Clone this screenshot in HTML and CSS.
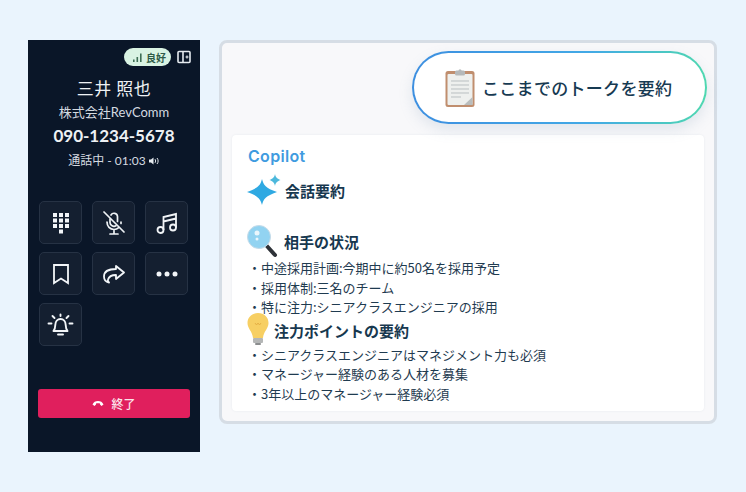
FILE: index.html
```html
<!DOCTYPE html>
<html lang="ja">
<head>
    <meta charset="UTF-8">
    <title>Copilot</title>
    <link rel="stylesheet" href="styles.css">
</head>
<body>
    <div class="page">
        <div class="phone">
            <div class="phone-top">
                <span class="signal">
                    <svg width="11" height="9" viewBox="0 0 11 9"><path d="M1 6.500h1.600V9H1zM4.500 4h1.600v5H4.500zM8 .5h1.600V9H8z" fill="#3f6f55"/></svg>
                    良好
                </span>
                <svg class="side-icon" width="14" height="14" viewBox="0 0 14 14" fill="none" stroke="#e6ebf0" stroke-width="1.600"><rect x="1" y="1.500" width="12" height="11" rx="1"/><path d="M6 1.500v11"/><path d="M8.500 7h3M10 5.500v3" stroke-width="1.200"/></svg>
            </div>
            <div class="name">三井 照也</div>
            <div class="company">株式会社RevComm</div>
            <div class="number">090-1234-5678</div>
            <div class="status">通話中 - 01:03
                <svg width="11" height="8" viewBox="0 0 11 8"><path d="M0 2.500h2L4.500.5v7L2 5.500H0z" fill="#e6ebf0"/><path d="M6 2.200c.8 1 .8 2.600 0 3.600M8 1c1.500 1.800 1.500 4.200 0 6" fill="none" stroke="#e6ebf0" stroke-width="1"/></svg>
            </div>
            <div class="controls">
                <button class="control">
                    <svg width="18" height="22" viewBox="0 0 18 22" fill="#f2f5f8"><rect x="1" y="1" width="4" height="4"/><rect x="7" y="1" width="4" height="4"/><rect x="13" y="1" width="4" height="4"/><rect x="1" y="6.500" width="4" height="4"/><rect x="7" y="6.500" width="4" height="4"/><rect x="13" y="6.500" width="4" height="4"/><rect x="1" y="12" width="4" height="4"/><rect x="7" y="12" width="4" height="4"/><rect x="13" y="12" width="4" height="4"/><rect x="7" y="17.500" width="4" height="4"/></svg>
                </button>
                <button class="control">
                    <svg width="28" height="26" viewBox="0 0 28 26" fill="none" stroke="#eef2f5" stroke-width="1.700" stroke-linecap="round"><path d="M4 2l20 20"/><path d="M11 5a3.500 3.500 0 0 1 6.500 1.500v5"/><path d="M10 9v3.500a4 4 0 0 0 6 3.300"/><path d="M7 12c0 4.500 3 7.500 7 7.500 2 0 3.500-.7 4.700-1.800M21 13.500V12M14 19.500v4M10 24h8"/></svg>
                </button>
                <button class="control">
                    <svg width="24" height="24" viewBox="0 0 24 24" fill="none" stroke="#f2f5f8" stroke-width="1.800"><circle cx="5.500" cy="19" r="3"/><circle cx="18" cy="16.500" r="3"/><path d="M8.500 19V6L21 3v13.500M8.500 10.500 21 7.500"/></svg>
                </button>
                <button class="control">
                    <svg width="18" height="22" viewBox="0 0 18 22" fill="none" stroke="#f2f5f8" stroke-width="1.800"><path d="M2 2h14v18l-7-4.500L2 20z"/></svg>
                </button>
                <button class="control">
                    <svg width="22" height="20" viewBox="0 0 22 20" fill="none" stroke="#f2f5f8" stroke-width="1.800" stroke-linejoin="round"><path d="M13 2l8 6.500-8 6.500v-4c-4.500 0-7 1-8 4.500-.5 1.500.5 2.500 1 3-3-.5-5-3-5-6 0-5 5-7.500 12-7.500z"/></svg>
                </button>
                <button class="control">
                    <svg width="22" height="6" viewBox="0 0 22 6" fill="#f2f5f8"><circle cx="3" cy="3" r="2.500"/><circle cx="11" cy="3" r="2.500"/><circle cx="19" cy="3" r="2.500"/></svg>
                </button>
                <button class="control">
                    <svg width="27" height="26" viewBox="0 0 27 26" fill="none" stroke="#f2f5f8" stroke-width="1.900" stroke-linecap="round" stroke-linejoin="round"><path d="M6.500 19c1.500-1.500 1.700-3 1.800-6 .1-3.500 2.200-6 5.200-6s5.100 2.500 5.200 6c.1 3 .3 4.500 1.800 6z"/><path d="M11 22.500h5"/><path d="M13.500 4V2.500M5.500 4l2 2M21.500 4l-2 2M1.500 11.500h3M22.500 11.500h3"/></svg>
                </button>
            </div>
            <button class="end-call">
                <svg width="12" height="7" viewBox="0 0 12 7"><path d="M.5 4.500C1.500 2 3.500 1 6 1s4.500 1 5.500 3.500L9.500 6 8 4.500V3.500C7 3 5 3 4 3.500v1L2.500 6z" fill="#fff"/></svg>
                終了
            </button>
        </div>

        <div class="panel">
            <div class="panel-head">
                <div class="summary-btn">
                    <svg width="30" height="38" viewBox="0 0 30 38">
                        <rect x="0.500" y="2" width="29" height="36" rx="2.500" fill="#c08e6e"/>
                        <rect x="2.500" y="5" width="25" height="31" rx="1" fill="#eef0ee"/>
                        <path d="M19 36l8.500-8v8z" fill="#b9bdbd"/>
                        <rect x="10" y="1.500" width="10" height="5" rx="1.500" fill="#b5b9ba"/>
                        <circle cx="15" cy="1.800" r="1.500" fill="#b5b9ba"/>
                        <path d="M6 12h18M6 16h18M6 20h18M6 24h18M6 28h10" stroke="#b9bfc1" stroke-width="1"/>
                    </svg>
                    <span>ここまでのトークを要約</span>
                </div>
            </div>
            <div class="card">
                <div class="brand">Copilot</div>
                <div class="heading heading-spark">
                    <svg width="35" height="32" viewBox="0 0 35 32"><path d="M15 5c1.500 6 3.500 9 15 13C18.500 22 16.500 25 15 31 13.500 25 11.500 22 0 18 11.500 14 13.500 11 15 5z" fill="#2fa9e2"/><path d="M28 0c.5 3 1.700 4.500 5.500 6-3.800 1.500-5 3-5.500 6-.5-3-1.700-4.500-5.500-6 3.800-1.500 5-3 5.500-6z" fill="#4cb8dc"/></svg>
                    <span>会話要約</span>
                </div>
                <div class="heading heading-lens">
                    <svg width="31" height="34" viewBox="0 0 31 34"><path d="M19 20l9 10" stroke="#2e3238" stroke-width="4" stroke-linecap="round"/><circle cx="12" cy="12" r="11.500" fill="#92d3f1" stroke="#c6dbe8" stroke-width="1"/><circle cx="10" cy="8" r="2.500" fill="#eaf6fc"/><circle cx="10" cy="14" r="1.500" fill="#eaf6fc"/></svg>
                    <span>相手の状況</span>
                </div>
                <ul class="points">
                    <li>・中途採用計画:今期中に約50名を採用予定</li>
                    <li>・採用体制:三名のチーム</li>
                    <li>・特に注力:シニアクラスエンジニアの採用</li>
                </ul>
                <div class="heading heading-bulb">
                    <svg width="22" height="32" viewBox="0 0 22 32"><path d="M11 0C4.500 0 .5 4.500.5 10c0 5.500 5 8.500 5.500 15h10c.5-6.500 5.500-9.500 5.500-15C21.500 4.500 17.500 0 11 0z" fill="#f7cf63"/><rect x="6" y="25" width="10" height="5" rx="1" fill="#b4b6b6"/><rect x="8" y="30" width="6" height="2" rx="1" fill="#8b8d8e"/><path d="M8 10l1.500 2 1.500-2 1.500 2 1.500-2" fill="none" stroke="#e2a93f" stroke-width=".8"/></svg>
                    <span>注力ポイントの要約</span>
                </div>
                <ul class="points">
                    <li>・シニアクラスエンジニアはマネジメント力も必須</li>
                    <li>・マネージャー経験のある人材を募集</li>
                    <li>・3年以上のマネージャー経験必須</li>
                </ul>
            </div>
        </div>
    </div>
</body>
</html>
```

FILE: styles.css
```css
* {
    box-sizing: border-box;
}
html, body {
    height: 100%;
}
body {
    margin: 0;
    background: #eaf4fd;
    font-family: "Noto Sans CJK JP", "Noto Sans", sans-serif;
    overflow: hidden;
}
.page {
    display: flex;
    align-items: flex-start;
    gap: 19px;
    padding: 40px 29px 0 28px;
}

/* softphone */
.phone {
    width: 172px;
    height: 412px;
    flex: none;
    display: flex;
    flex-direction: column;
    align-items: center;
    padding: 8px 10px 34px;
    background: #0a1628;
    color: #eef1f4;
    font-family: Lato, "Noto Sans CJK JP", sans-serif;
}
.phone-top {
    align-self: stretch;
    display: flex;
    justify-content: flex-end;
    align-items: center;
    gap: 6px;
    height: 18px;
    margin-right: -1px;
}
.signal {
    display: flex;
    align-items: center;
    gap: 3px;
    height: 18px;
    padding: 0 5px 0 8px;
    border-radius: 9px;
    background: #d9f3e3;
    color: #2f5b47;
    font-size: 10px;
    font-weight: 700;
}
.name {
    margin-top: 9px;
    font-size: 17px;
    letter-spacing: 0.5px;
    line-height: 26px;
    font-family: "Noto Sans CJK JP", sans-serif;
    font-weight: 400;
}
.company {
    margin-top: 1px;
    font-size: 13px;
    line-height: 20px;
    color: #d5dae0;
}
.number {
    margin-top: 1px;
    font-size: 17px;
    line-height: 26px;
    font-weight: 700;
}
.status {
    margin-top: 2px;
    display: flex;
    align-items: center;
    gap: 3px;
    font-size: 12px;
    line-height: 20px;
    color: #d5dae0;
}
.controls {
    align-self: stretch;
    display: grid;
    grid-template-columns: repeat(3, 43px);
    grid-auto-rows: 43px;
    column-gap: 10px;
    row-gap: 8px;
    margin-top: 30px;
    margin-left: 1px;
}
.control {
    display: flex;
    align-items: center;
    justify-content: center;
    padding: 0;
    background: #141f30;
    border: 1px solid #263244;
    border-radius: 5px;
}
.end-call {
    align-self: stretch;
    display: flex;
    align-items: center;
    justify-content: center;
    gap: 7px;
    height: 29px;
    margin: auto 0 0 0;
    width: 152px;
    border: none;
    border-radius: 3px;
    background: #e01f5d;
    color: #fbe3ea;
    font-family: "Noto Sans CJK JP", sans-serif;
    font-size: 12px;
    font-weight: 500;
}

/* summary panel */
.panel {
    width: 498px;
    height: 384px;
    flex: none;
    padding: 8px 10px 10px;
    background: #f8f8fa;
    border: 3px solid #d6dde5;
    border-radius: 8px;
}
.panel-head {
    display: flex;
    justify-content: flex-end;
    margin-right: -3px;
}
.summary-btn {
    display: flex;
    align-items: center;
    gap: 7px;
    width: 295px;
    height: 73px;
    padding-left: 31px;
    border: 2px solid transparent;
    border-radius: 37px;
    background:
        linear-gradient(#fff, #fff) padding-box,
        linear-gradient(90deg, #3d8fe0, #42a9e6 60%, #4fd8b0) border-box;
    box-shadow: 0 6px 14px rgba(120, 150, 180, 0.18);
    color: #173a52;
    font-size: 17px;
    font-weight: 500;
    letter-spacing: 0.3px;
}
.card {
    height: 276px;
    margin-top: 11px;
    padding: 10px 16px 0;
    background: #fff;
    border-radius: 4px;
    box-shadow: 0 0 2px rgba(120, 140, 160, 0.15);
    color: #1f3b50;
}
.brand {
    font-family: Inter, sans-serif;
    font-size: 16px;
    font-weight: 600;
    line-height: 22px;
    letter-spacing: 0.3px;
    color: #3f9be0;
}
.heading {
    display: flex;
    align-items: center;
    font-size: 15px;
    font-weight: 700;
    color: #17384f;
}
.heading svg {
    flex: none;
    margin-left: -1px;
}
.heading-spark {
    height: 32px;
    margin-top: 7px;
    gap: 3px;
}
.heading-lens {
    height: 33px;
    margin-top: 19px;
    gap: 6px;
}
.heading-bulb {
    height: 28px;
    gap: 5px;
}
.heading-bulb svg {
    margin-bottom: 4px;
}
.points {
    margin: 0;
    padding: 0;
    list-style: none;
    font-size: 13px;
    line-height: 19.500px;
}
```
